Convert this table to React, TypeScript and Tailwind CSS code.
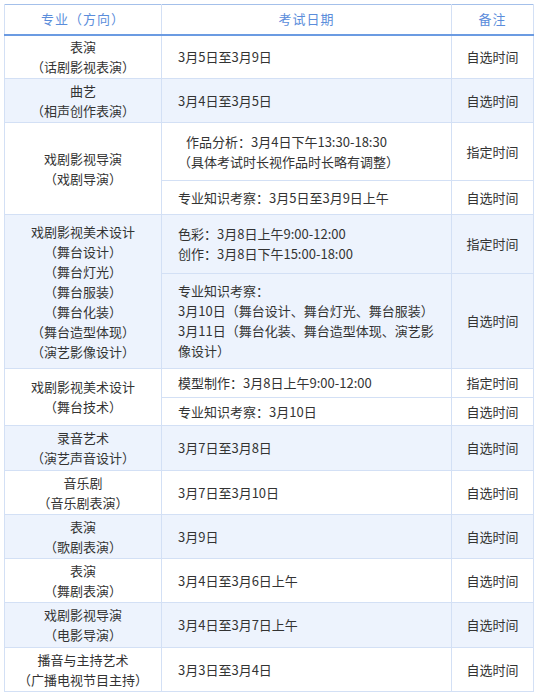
import React from "react";

type Sub = { lines: React.ReactNode[]; note: string; h: number };
type Row = { major: string[]; subs: Sub[]; alt: boolean };

const rows: Row[] = [
  { major: ["表演", "（话剧影视表演）"], subs: [{ lines: ["3月5日至3月9日"], note: "自选时间", h: 44 }], alt: false },
  { major: ["曲艺", "（相声创作表演）"], subs: [{ lines: ["3月4日至3月5日"], note: "自选时间", h: 44 }], alt: true },
  {
    major: ["戏剧影视导演", "（戏剧导演）"],
    subs: [
      {
        lines: [<span className="pl-2">作品分析：3月4日下午13:30-18:30</span>, "（具体考试时长视作品时长略有调整）"],
        note: "指定时间",
        h: 58,
      },
      { lines: ["专业知识考察：3月5日至3月9日上午"], note: "自选时间", h: 34 },
    ],
    alt: false,
  },
  {
    major: ["戏剧影视美术设计", "（舞台设计）", "（舞台灯光）", "（舞台服装）", "（舞台化装）", "（舞台造型体现）", "（演艺影像设计）"],
    subs: [
      { lines: ["色彩：3月8日上午9:00-12:00", "创作：3月8日下午15:00-18:00"], note: "指定时间", h: 59 },
      {
        lines: [
          "专业知识考察：",
          "3月10日（舞台设计、舞台灯光、舞台服装）",
          "3月11日（舞台化装、舞台造型体现、演艺影",
          "像设计）",
        ],
        note: "自选时间",
        h: 95,
      },
    ],
    alt: true,
  },
  {
    major: ["戏剧影视美术设计", "（舞台技术）"],
    subs: [
      { lines: ["模型制作：3月8日上午9:00-12:00"], note: "指定时间", h: 29 },
      { lines: ["专业知识考察：3月10日"], note: "自选时间", h: 28 },
    ],
    alt: false,
  },
  { major: ["录音艺术", "（演艺声音设计）"], subs: [{ lines: ["3月7日至3月8日"], note: "自选时间", h: 45 }], alt: true },
  { major: ["音乐剧", "（音乐剧表演）"], subs: [{ lines: ["3月7日至3月10日"], note: "自选时间", h: 44 }], alt: false },
  { major: ["表演", "（歌剧表演）"], subs: [{ lines: ["3月9日"], note: "自选时间", h: 44 }], alt: true },
  { major: ["表演", "（舞剧表演）"], subs: [{ lines: ["3月4日至3月6日上午"], note: "自选时间", h: 44 }], alt: false },
  { major: ["戏剧影视导演", "（电影导演）"], subs: [{ lines: ["3月4日至3月7日上午"], note: "自选时间", h: 45 }], alt: true },
  { major: ["播音与主持艺术", "（广播电视节目主持）"], subs: [{ lines: ["3月3日至3月4日"], note: "自选时间", h: 44 }], alt: false },
];

const cell = "border border-[#d3e0f5] p-0 align-middle";

export default function App() {
  return (
    <div className="bg-white pl-[4px] pt-[4px] pb-[6px]" style={{ fontFamily: '"Noto Sans CJK SC", sans-serif' }}>
      <table className="w-[529px] table-fixed border-collapse border border-[#a4c0ea] text-[13px] leading-[20px] text-[#333333]">
        <colgroup>
          <col className="w-[157px]" />
          <col className="w-[290px]" />
          <col className="w-[82px]" />
        </colgroup>
        <thead>
          <tr className="h-[30px] bg-white text-[#5b8ddb]">
            <th className="border-x border-[#d3e0f5] border-b-2 border-b-[#6b9be2] p-0 text-center font-normal tracking-[1px]">
              专业（方向）
            </th>
            <th className="border-x border-[#d3e0f5] border-b-2 border-b-[#6b9be2] p-0 text-center font-normal tracking-[1px]">
              考试日期
            </th>
            <th className="border-x border-[#d3e0f5] border-b-2 border-b-[#6b9be2] p-0 text-center font-normal tracking-[1px]">
              备注
            </th>
          </tr>
        </thead>
        <tbody>
          {rows.map((row, ri) =>
            row.subs.map((sub, si) => (
              <tr key={`${ri}-${si}`} className={row.alt ? "bg-[#edf3fd]" : "bg-white"} style={{ height: sub.h }}>
                {si === 0 && (
                  <td rowSpan={row.subs.length} className={`${cell} text-center`}>
                    {row.major.map((m, i) => (
                      <div key={i} className="whitespace-nowrap">
                        {m}
                      </div>
                    ))}
                  </td>
                )}
                <td className={`${cell} pl-[16px] text-left`}>
                  {sub.lines.map((l, i) => (
                    <div key={i} className="whitespace-nowrap">
                      {l}
                    </div>
                  ))}
                </td>
                <td className={`${cell} text-center whitespace-nowrap`}>{sub.note}</td>
              </tr>
            ))
          )}
        </tbody>
      </table>
    </div>
  );
}
